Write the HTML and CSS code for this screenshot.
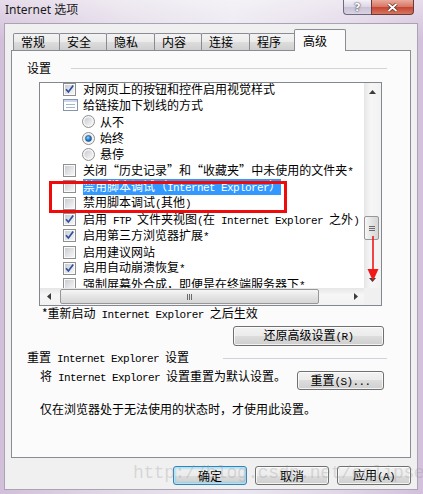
FILE: index.html
```html
<!DOCTYPE html>
<html lang="zh-CN">
<head>
    <meta charset="UTF-8">
    <meta name="viewport" content="width=device-width, initial-scale=1.0">
    <title>Internet 选项</title>
    <link rel="stylesheet" href="styles.css">
</head>
<body>

    <!-- shared little icons -->
    <svg class="defs" width="0" height="0">
        <defs>
            <linearGradient id="boxfill" x1="0" y1="0" x2="1" y2="1">
                <stop offset="0" stop-color="#c9ccd2"/>
                <stop offset="1" stop-color="#f7f7f7"/>
            </linearGradient>
            <radialGradient id="dotfill" cx="0.4" cy="0.35" r="0.7">
                <stop offset="0" stop-color="#9fdcff"/>
                <stop offset="0.5" stop-color="#2a86d6"/>
                <stop offset="1" stop-color="#0d4d94"/>
            </radialGradient>
            <symbol id="chk" viewBox="0 0 13 13">
                <rect x="0.5" y="0.5" width="12" height="12" fill="#fafafa" stroke="#8e8f8f"/>
                <rect x="2" y="2" width="9" height="9" fill="url(#boxfill)"/>
            </symbol>
            <symbol id="chkon" viewBox="0 0 13 13">
                <rect x="0.5" y="0.5" width="12" height="12" fill="#fafafa" stroke="#8e8f8f"/>
                <rect x="2" y="2" width="9" height="9" fill="url(#boxfill)"/>
                <path d="M3 6.2 L5.4 9 L10.2 2.6" fill="none" stroke="#2d4f9e" stroke-width="1.7"/>
            </symbol>
            <symbol id="rad" viewBox="0 0 13 13">
                <circle cx="6.5" cy="6.5" r="6" fill="#f6f6f6" stroke="#8e8f8f"/>
                <circle cx="6.5" cy="6.5" r="4" fill="url(#boxfill)"/>
            </symbol>
            <symbol id="radon" viewBox="0 0 13 13">
                <circle cx="6.5" cy="6.5" r="6" fill="#f6f6f6" stroke="#8e8f8f"/>
                <circle cx="6.5" cy="6.5" r="4" fill="url(#boxfill)"/>
                <circle cx="6.5" cy="6.5" r="3" fill="url(#dotfill)" stroke="#1b4f8a" stroke-width="0.6"/>
            </symbol>
            <symbol id="grp" viewBox="0 0 15 12">
                <rect x="0.5" y="0.5" width="14" height="11" fill="#fff" stroke="#8395b0"/>
                <rect x="1" y="1" width="13" height="2" fill="#c9d8ec"/>
                <path d="M3 5.5h9M3 8.5h9" stroke="#a3b6d0"/>
            </symbol>
        </defs>
    </svg>

    <div class="window">
        <div class="titlebar">
            <span class="title">Internet 选项</span>
            <div class="caption">
                <span class="cap-btn help">?</span>
                <span class="cap-btn close">
                    <svg width="11" height="9" viewBox="0 0 11 9">
                        <path d="M1.5 1 L9.5 8 M9.5 1 L1.5 8" stroke="#5a2a24" stroke-width="3.2"/>
                        <path d="M1.5 1 L9.5 8 M9.5 1 L1.5 8" stroke="#fff" stroke-width="1.8"/>
                    </svg>
                </span>
            </div>
        </div>

        <div class="client">
            <div class="tabs">
                <div class="tab">常规</div>
                <div class="tab">安全</div>
                <div class="tab">隐私</div>
                <div class="tab">内容</div>
                <div class="tab">连接</div>
                <div class="tab">程序</div>
                <div class="tab active">高级</div>
            </div>

            <div class="page">
                <div class="group-head">
                    <span class="ui">设置</span>
                    <i class="rule"></i>
                </div>

                <div class="listbox">
                    <div class="rows">
                        <div class="row"><svg class="box"><use href="#chkon"/></svg><span>对网页上的按钮和控件启用视觉样式</span></div>
                        <div class="row"><svg class="grp"><use href="#grp"/></svg><span>给链接加下划线的方式</span></div>
                        <div class="row sub"><svg class="box"><use href="#rad"/></svg><span>从不</span></div>
                        <div class="row sub"><svg class="box"><use href="#radon"/></svg><span>始终</span></div>
                        <div class="row sub"><svg class="box"><use href="#rad"/></svg><span>悬停</span></div>
                        <div class="row"><svg class="box"><use href="#chk"/></svg><span>关闭<span class="q">“</span>历史记录<span class="q">”</span>和<span class="q">“</span>收藏夹<span class="q">”</span>中未使用的文件夹<span class="en">*</span></span></div>
                        <div class="row"><svg class="box"><use href="#chk"/></svg><span class="selected">禁用脚本调试（<span class="en">Internet Explorer</span>）</span></div>
                        <div class="row"><svg class="box"><use href="#chk"/></svg><span>禁用脚本调试<span class="en">(</span>其他<span class="en">)</span></span></div>
                        <div class="row"><svg class="box"><use href="#chkon"/></svg><span>启用<span class="en"> FTP </span>文件夹视图<span class="en">(</span>在<span class="en"> Internet Explorer </span>之外<span class="en">)</span></span></div>
                        <div class="row"><svg class="box"><use href="#chkon"/></svg><span>启用第三方浏览器扩展<span class="en">*</span></span></div>
                        <div class="row"><svg class="box"><use href="#chk"/></svg><span>启用建议网站</span></div>
                        <div class="row"><svg class="box"><use href="#chkon"/></svg><span>启用自动崩溃恢复<span class="en">*</span></span></div>
                        <div class="row"><svg class="box"><use href="#chk"/></svg><span>强制屏幕外合成，即便是在终端服务器下<span class="en">*</span></span></div>
                    </div>

                    <div class="vscroll">
                        <div class="arrow"><svg width="7" height="4"><path d="M0 4 L3.5 0 L7 4Z" fill="#3c3c3c"/></svg></div>
                        <div class="vthumb"><i></i><i></i><i></i></div>
                        <div class="track"></div>
                        <div class="arrow"><svg width="7" height="4"><path d="M0 0 L7 0 L3.5 4Z" fill="#3c3c3c"/></svg></div>
                    </div>

                    <div class="hscroll">
                        <div class="arrow"><svg width="4" height="7"><path d="M4 0 L0 3.5 L4 7Z" fill="#3c3c3c"/></svg></div>
                        <div class="hthumb"><i></i><i></i><i></i></div>
                        <div class="track"></div>
                        <div class="arrow"><svg width="4" height="7"><path d="M0 0 L4 3.5 L0 7Z" fill="#3c3c3c"/></svg></div>
                    </div>
                    <div class="corner"></div>

                    <!-- red markup drawn over the screenshot -->
                    <div class="mark-box"></div>
                    <svg class="mark-arrow" width="12" height="46" viewBox="0 0 12 46">
                        <path d="M6 0 V36" stroke="#f01818" stroke-width="1.6"/>
                        <path d="M0.5 33 L11.5 33 L6 45Z" fill="#f01818"/>
                    </svg>
                </div>

                <p class="note restart">*重新启动<span class="en"> Internet Explorer </span>之后生效</p>
                <div class="btn-line">
                    <button class="btn restore">还原高级设置<span class="en">(R)</span></button>
                </div>

                <div class="group-head reset-head">
                    <span>重置<span class="en"> Internet Explorer </span>设置</span>
                    <i class="rule short"></i>
                </div>
                <div class="reset-row">
                    <p class="note">将<span class="en"> Internet Explorer </span>设置重置为默认设置。</p>
                    <button class="btn reset">重置<span class="en">(S)...</span></button>
                </div>
                <p class="note last">仅在浏览器处于无法使用的状态时，才使用此设置。</p>
            </div>

            <div class="footer">
                <span class="watermark">http://blog.csdn.net/eclipseuc</span>
                <button class="btn default">确定</button>
                <button class="btn">取消</button>
                <button class="btn">应用<span class="en">(A)</span></button>
            </div>
        </div>
    </div>

</body>
</html>
```

FILE: styles.css
```css
* {
    box-sizing: border-box;
}

body {
    margin: 0;
    font-family: "Noto Sans CJK SC", sans-serif;
    font-size: 12px;
    color: #000;
}

.defs {
    position: absolute;
}

/* half-width latin, SimSun style */
.en {
    font-family: "Liberation Mono", monospace;
    font-size: 11px;
    letter-spacing: -0.6px;
}

.q {
    font-feature-settings: "fwid";
}

/* Window frame */
.window {
    width: 423px;
    height: 494px;
    overflow: hidden;
    background:
        linear-gradient(180deg, rgba(255, 255, 255, 0.45), rgba(255, 255, 255, 0) 40px),
        linear-gradient(90deg, #d2bfda, #e3dbe8 30%, #ebe7f0 55%, #e1d7e7 80%, #d3c0dc);
}

.titlebar {
    height: 23px;
    display: flex;
    justify-content: space-between;
    align-items: flex-start;
}

.title {
    margin: 2px 0 0 5px;
    font-family: "Noto Sans", "Noto Sans CJK SC", sans-serif;
    font-size: 12px;
    line-height: 16px;
    color: #1a1a1a;
}

.caption {
    display: flex;
    margin-right: 9px;
}

.cap-btn {
    height: 15px;
    display: flex;
    align-items: center;
    justify-content: center;
    border: 1px solid #6f6a80;
    border-top: none;
}

.help {
    width: 28px;
    border-radius: 0 0 0 4px;
    border-right: none;
    background: linear-gradient(#f4f1f7, #dcd6e4 50%, #c9c1d6 50%, #dad3e3);
    color: #fff;
    font-family: "DejaVu Sans", sans-serif;
    font-weight: bold;
    font-size: 11px;
    text-shadow: 0 0 2px #3a3a4a, 0 0 1px #3a3a4a;
}

.close {
    width: 43px;
    border-radius: 0 0 4px 0;
    border-color: #6b3a38;
    background: linear-gradient(#e9ab9d, #d87463 50%, #c3432f 50%, #d67660);
}

/* Dialog body */
.client {
    margin-left: 4px;
    width: 414px;
    height: 467px;
    border: 1px solid #a9a3b3;
    background: #f0f0f0;
}

.tabs {
    display: flex;
    align-items: flex-end;
    height: 21px;
    margin-top: 5px;
    padding-left: 8px;
}

.tab {
    width: 48px;
    height: 17px;
    margin-left: -1px;
    padding-left: 7px;
    border: 1px solid #898c95;
    border-bottom: none;
    border-radius: 2px 2px 0 0;
    background: linear-gradient(#f3f3f3, #ebebeb 50%, #dddddd 50%, #cfcfcf);
    font-size: 12px;
    line-height: 15px;
}

.tab:first-child {
    width: 47px;
    margin-left: 0;
}

.tab:nth-child(3),
.tab:nth-child(5) {
    width: 49px;
}

.tab.active {
    position: relative;
    z-index: 1;
    width: 52px;
    height: 22px;
    margin: 0 -2px -1px -3px;
    padding: 3px 0 0 8px;
    background: #fbfbfb;
}

.page {
    margin-left: 6px;
    width: 400px;
    height: 408px;
    border: 1px solid #898c95;
    background: #fbfbfb;
}

.group-head {
    display: flex;
    align-items: center;
    height: 14px;
    margin-top: 10px;
    padding-left: 15px;
    line-height: 14px;
}

.rule {
    flex: 1;
    margin: 0 23px 0 20px;
    border-top: 1px solid #d0d4d9;
}

.rule.short {
    flex: none;
    width: 164px;
    margin-left: auto;
}

/* Settings list */
.listbox {
    position: relative;
    margin: 7px 0 0 27px;
    width: 343px;
    height: 224px;
    border: 1px solid #828790;
    background: #fff;
    display: grid;
    grid-template-columns: 324px 17px;
    grid-template-rows: 205px 17px;
}

.rows {
    overflow: hidden;
}

.row {
    display: flex;
    align-items: center;
    height: 16.3px;
    padding-left: 23px;
    white-space: nowrap;
    line-height: 14px;
}

.row:first-child {
    margin-top: -2px;
}

.row.sub {
    padding-left: 42px;
}

.box {
    flex: none;
    width: 13px;
    height: 13px;
    margin-right: 7px;
}

.row.sub .box {
    margin-right: 5px;
}

.grp {
    flex: none;
    width: 15px;
    height: 12px;
    margin-right: 5px;
}

.selected {
    background: #3399ff;
    color: #fff;
    line-height: 13px;
}

.vscroll,
.hscroll {
    display: flex;
    background: linear-gradient(90deg, #e6e6e6, #f6f6f6 40%, #f2f2f2);
}

.vscroll {
    flex-direction: column;
}

.hscroll {
    background: linear-gradient(#e6e6e6, #f6f6f6 40%, #f2f2f2);
}

.arrow {
    flex: none;
    width: 17px;
    height: 17px;
    display: flex;
    align-items: center;
    justify-content: center;
}

.track {
    flex: 1;
}

.vthumb,
.hthumb {
    flex: none;
    display: flex;
    align-items: center;
    justify-content: center;
    gap: 1px;
    border: 1px solid #979797;
    border-radius: 2px;
}

.vthumb {
    flex-direction: column;
    height: 24px;
    margin: 116px 2px 0 0;
    background: linear-gradient(90deg, #f6f6f6, #e4e4e4 50%, #d6d6d6);
}

.vthumb i {
    width: 6px;
    height: 1px;
    background: #6a6a6a;
}

.hthumb {
    width: 259px;
    height: 15px;
    margin: 1px 0 0 3px;
    background: linear-gradient(#f6f6f6, #e4e4e4 50%, #d6d6d6);
}

.hthumb i {
    width: 1px;
    height: 6px;
    background: #6a6a6a;
}

.corner {
    background: #f0f0f0;
}

.mark-box {
    position: absolute;
    left: 9px;
    top: 98px;
    width: 238px;
    height: 32px;
    border: 3px solid #f00a0a;
}

.mark-arrow {
    position: absolute;
    left: 327px;
    top: 153px;
}

/* Lower part of the page */
.note {
    margin: 0;
    line-height: 14px;
    white-space: nowrap;
}

.restart {
    margin-left: 30px;
}

.btn-line {
    margin-top: 4px;
    padding-left: 221px;
}

.btn {
    height: 19px;
    padding: 0;
    border: 1px solid #707070;
    border-radius: 3px;
    background: linear-gradient(#f2f2f2, #ebebeb 50%, #dddddd 50%, #cfcfcf);
    box-shadow: inset 0 0 0 1px rgba(255, 255, 255, 0.75);
    font-family: "Noto Sans CJK SC", sans-serif;
    font-size: 12px;
    line-height: 16px;
    color: #000;
}

.restore {
    width: 151px;
    height: 20px;
}

.reset-head {
    margin-top: 5px;
}

.reset-row {
    display: flex;
    align-items: flex-start;
    margin-top: 4px;
    padding-left: 28px;
}

.reset {
    width: 87px;
    margin: 2px 26px 0 auto;
}

.last {
    margin: 12px 0 0 28px;
}

/* Bottom buttons */
.footer {
    position: relative;
    display: flex;
    justify-content: flex-end;
    gap: 8px;
    margin-top: 8px;
    padding-right: 6px;
}

.footer .btn {
    width: 74px;
}

.btn.default {
    border-color: #3c7fb1;
    box-shadow: inset 0 0 0 1px #a8e6fb, inset 0 0 2px 2px rgba(80, 200, 245, 0.35);
}

.watermark {
    position: absolute;
    left: 128px;
    top: -5px;
    z-index: 1;
    font-family: "Liberation Mono", monospace;
    font-size: 18px;
    line-height: 24px;
    letter-spacing: -0.4px;
    color: rgba(150, 150, 150, 0.3);
    white-space: nowrap;
    pointer-events: none;
}
```
